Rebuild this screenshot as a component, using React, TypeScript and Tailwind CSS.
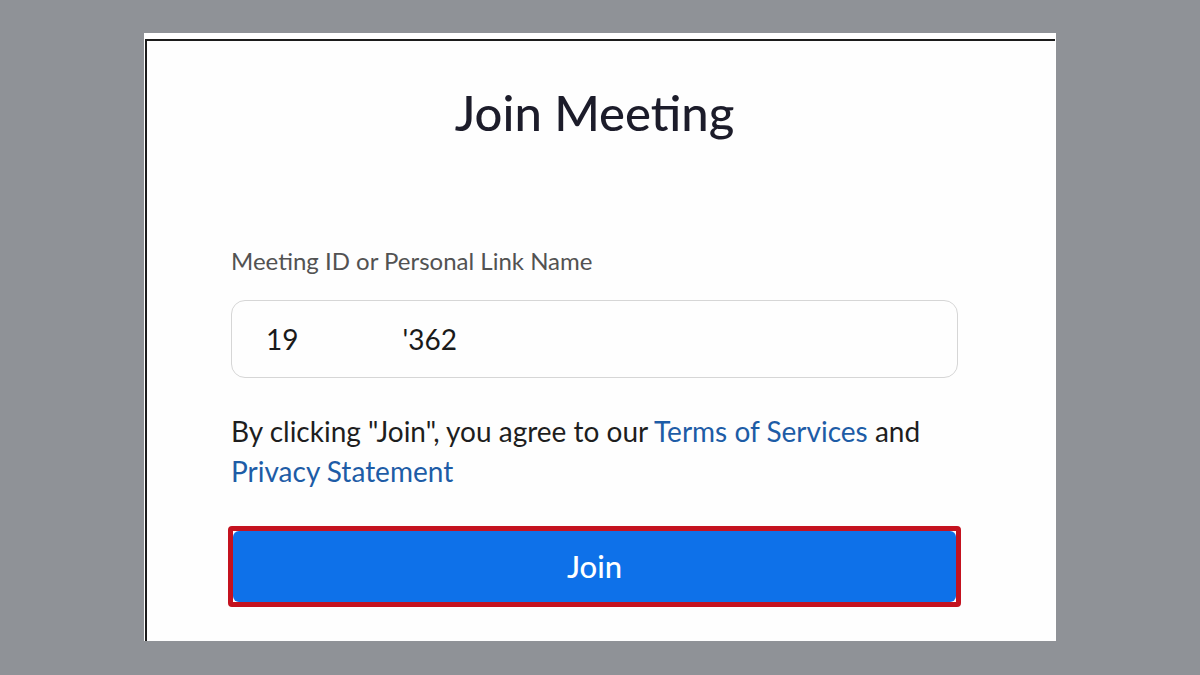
export default function App() {
  return (
    <div className="w-[1200px] h-[675px] bg-[#8f9297] pt-[33px] pl-[144px] overflow-hidden" style={{ fontFamily: "Lato, 'Open Sans', sans-serif" }}>
      <div className="w-[912px] h-[608px] bg-white pt-[6px]">
        <div className="h-full ml-px mr-px border-t-2 border-l-2 border-[#1c1c1c] bg-[#fefefe]">
          <div className="w-[727px] ml-[84px] flex flex-col">
            <h1 className="mt-[41px] text-center text-[49px] leading-[60px] font-medium text-[#1c1c2a]">Join Meeting</h1>

            <label className="mt-[104px] text-[24px] leading-[30px] text-[#525252]">Meeting ID or Personal Link Name</label>

            <div className="mt-[24px] h-[78px] rounded-[14px] border border-[#d6d6d6] flex items-center pl-[34px] text-[28px] text-[#1a1a1a]">
              <span>19</span>
              <span className="ml-[104px]">'362</span>
            </div>

            <p className="mt-[33px] text-[28px] leading-[40px] text-[#1e1e1e]">
              By clicking "Join", you agree to our{" "}
              <a className="text-[#1d5ca6]">Terms of Services</a> and{" "}
              <a className="text-[#1d5ca6]">Privacy Statement</a>
            </p>

            <div className="mt-[35px] -ml-[3px] w-[733px] h-[81px] rounded-[4px] border-[5px] border-[#c4121f]">
              <button className="w-full h-full rounded-[6px] bg-[#0e71e9] text-white text-[31px] font-medium">Join</button>
            </div>
          </div>
        </div>
      </div>
    </div>
  );
}
